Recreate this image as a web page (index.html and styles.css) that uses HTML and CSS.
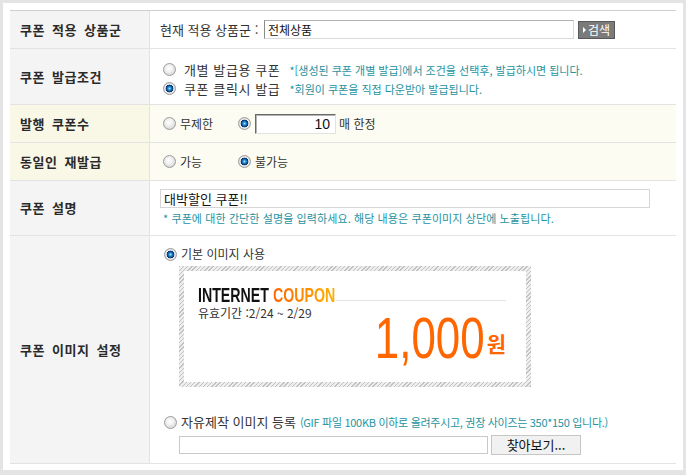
FILE: index.html
```html
<!DOCTYPE html>
<html lang="ko">
<head>
<meta charset="utf-8">
<title>쿠폰 설정</title>
<link rel="stylesheet" href="styles.css">
</head>
<body>
<div class="panel">
  <div class="form">
    <div class="row r1">
      <div class="label">쿠폰 적용 상품군</div>
      <div class="cell cell-inline">
        <span class="lead">현재 적용 상품군 :</span>
        <span class="field field-group">전체상품</span>
        <span class="btn-search">검색</span>
      </div>
    </div>

    <div class="row r2">
      <div class="label">쿠폰 발급조건</div>
      <div class="cell cell-lines">
        <div class="line">
          <span class="radio"></span>
          <span class="opt-big">개별 발급용 쿠폰</span>
          <span class="note note-inline">*[생성된 쿠폰 개별 발급]에서 조건을 선택후, 발급하시면 됩니다.</span>
        </div>
        <div class="line">
          <span class="radio on"></span>
          <span class="opt-big">쿠폰 클릭시 발급</span>
          <span class="note note-inline">*회원이 쿠폰을 직접 다운받아 발급됩니다.</span>
        </div>
      </div>
    </div>

    <div class="row r3 cream">
      <div class="label">발행 쿠폰수</div>
      <div class="cell cell-inline">
        <span class="opt"><span class="radio"></span><span class="opt-text">무제한</span></span>
        <span class="opt2">
          <span class="radio on"></span>
          <span class="field field-num">10</span>
          <span class="unit">매 한정</span>
        </span>
      </div>
    </div>

    <div class="row r4 cream">
      <div class="label">동일인 재발급</div>
      <div class="cell cell-inline">
        <span class="opt"><span class="radio"></span><span class="opt-text">가능</span></span>
        <span class="opt2"><span class="radio on"></span><span class="opt-text">불가능</span></span>
      </div>
    </div>

    <div class="row r5">
      <div class="label">쿠폰 설명</div>
      <div class="cell cell-stack">
        <span class="field field-desc">대박할인 쿠폰!!</span>
        <span class="note note-below">* 쿠폰에 대한 간단한 설명을 입력하세요. 해당 내용은 쿠폰이미지 상단에 노출됩니다.</span>
      </div>
    </div>

    <div class="row r6">
      <div class="label">쿠폰 이미지 설정</div>
      <div class="cell cell-stack cell-image">
        <div class="line line-basic">
          <span class="radio on"></span>
          <span class="opt-text">기본 이미지 사용</span>
        </div>
        <div class="coupon">
          <div class="coupon-inner">
            <div class="cp-head">
              <span class="cp-title-box"><span class="cp-title">INTERNET <span class="cp-orange">COUPON</span></span></span>
              <span class="cp-rule"></span>
            </div>
            <div class="cp-date">유효기간 :2/24 ~ 2/29</div>
            <div class="cp-amount"><span class="cp-num">1,000</span><span class="cp-won">원</span></div>
          </div>
        </div>
        <div class="line line-custom">
          <span class="radio"></span>
          <span class="opt-text opt-13">자유제작 이미지 등록</span>
          <span class="note note-custom">(GIF 파일 100KB 이하로 올려주시고, 권장 사이즈는 350*150 입니다.)</span>
        </div>
        <div class="file-row">
          <span class="field field-file"></span>
          <span class="btn-browse">찾아보기...</span>
        </div>
      </div>
    </div>
  </div>
</div>
</body>
</html>
```

FILE: styles.css
```css
* { box-sizing: border-box; }
html, body { margin: 0; }
body {
  background: #e4e4e4;
  padding: 3px;
  font-family: "Noto Sans CJK KR", "Liberation Sans", sans-serif;
  font-size: 12px;
  color: #333;
}
.panel {
  background: #fff;
  width: 680px;
  height: 467px;
  padding: 7px 7px 6px 7px;
}
.form {
  width: 666px;
  border-top: 1px solid #cfcfcf;
}
.row {
  display: grid;
  grid-template-columns: 140px 1fr;
  border-bottom: 1px solid #e3e3e3;
}
.r1 { height: 38px; }
.r2 { height: 56px; }
.r3 { height: 38px; }
.r4 { height: 38px; }
.r5 { height: 55px; }
.r6 { height: 228px; }

.label {
  background: #f4f4f4;
  border-right: 1px solid #e3e3e3;
  display: flex;
  align-items: center;
  padding-left: 10px;
  font-weight: bold;
  font-size: 13px;
  letter-spacing: 0.5px;
  word-spacing: 3px;
  color: #2a2a2a;
  line-height: 16px;
}
.cream .label { background: #f9f7e6; }
.cream .cell { background: #fcfcf2; }

.cell { padding-left: 10px; }
.cell-inline { display: flex; align-items: center; }
.cell-lines { display: flex; flex-direction: column; padding-top: 11px; padding-left: 13px; }
.cell-stack { display: flex; flex-direction: column; align-items: flex-start; }

.lead { width: 104px; font-size: 13px; line-height: 16px; white-space: nowrap; }

.field {
  display: inline-flex;
  align-items: center;
  background: #fff;
  color: #111;
  white-space: nowrap;
}
.field-group {
  width: 310px;
  height: 19px;
  border: 1px solid #dadada;
  border-left-color: #8a8a8a;
  border-top-color: #b0b0b0;
  padding-left: 3px;
  font-size: 12px;
}
.btn-search {
  margin-left: 4px;
  width: 37px;
  height: 18px;
  background: #7b7b7b;
  border: 1px solid #585858;
  color: #fff;
  font-size: 12px;
  line-height: 16px;
  display: inline-flex;
  align-items: center;
  padding-left: 4px;
}
.btn-search::before {
  content: "";
  width: 0;
  height: 0;
  border-left: 3px solid #fff;
  border-top: 3px solid transparent;
  border-bottom: 3px solid transparent;
  margin-right: 2px;
}

.radio {
  display: inline-block;
  flex: none;
  width: 13px;
  height: 13px;
  border-radius: 50%;
  border: 1px solid #9c9c9c;
  background: radial-gradient(circle at 45% 40%, #ffffff 0, #f2f2f2 35%, #c9c9c9 100%);
}
.radio.on {
  background: radial-gradient(circle at 50% 50%, #a8e4ff 0, #2b8fd6 1.5px, #0d5da8 2.6px, #06305e 3.6px, #f4f4f4 4.2px, #e2e2e2 5px, #b9b9b9 100%);
}

.line { display: flex; align-items: center; height: 19px; }
.opt-big { margin-left: 8px; font-size: 13px; letter-spacing: 0.6px; word-spacing: 0; line-height: 16px; }
.note {
  color: #2593a0;
  font-size: 11px;
  letter-spacing: 0;
  line-height: 14px;
  white-space: nowrap;
}
.note-inline { margin-left: 9px; }

.opt { display: flex; align-items: center; width: 75px; margin-left: 3px; }
.opt2 { display: flex; align-items: center; }
.opt-text { margin-left: 4px; font-size: 12px; line-height: 16px; white-space: nowrap; }
.opt-13 { font-size: 13px; }
.field-num {
  margin-left: 4px;
  width: 81px;
  height: 20px;
  border: 1px solid;
  border-color: #6a6a6a #e2e2e2 #e2e2e2 #6a6a6a;
  box-shadow: inset 1px 1px 0 #b4b4b4;
  justify-content: flex-end;
  padding-right: 5px;
  font-family: "Liberation Sans", sans-serif;
  font-size: 14px;
}
.unit { margin-left: 3px; font-size: 12px; line-height: 16px; }

.r5 .cell { padding-top: 8px; }
.field-desc {
  width: 490px;
  height: 19px;
  border: 1px solid #d6d6d6;
  padding-left: 3px;
  font-size: 13px;
}
.note-below { margin-top: 3px; margin-left: 3px; letter-spacing: 0.1px; }

.cell-image { padding-top: 10px; }
.line-basic { height: 16px; margin-left: 4px; }
.coupon {
  margin-top: 4px;
  margin-left: 19px;
  width: 352px;
  height: 121px;
  padding: 5px;
  background: repeating-linear-gradient(135deg, #c2c2c2 0 1px, #eeeeee 1px 3px);
}
.coupon-inner {
  background: #fff;
  width: 100%;
  height: 100%;
  padding: 14px 20px 0 14px;
  display: grid;
  grid-template-columns: 1fr auto;
  grid-template-rows: 21px auto;
}
.cp-head {
  grid-column: 1 / 3;
  display: flex;
  height: 21px;
  overflow: hidden;
}
.cp-title-box { width: 138px; flex: none; overflow: hidden; }
.cp-title {
  display: inline-block;
  font-family: "Liberation Sans", sans-serif;
  font-weight: bold;
  font-size: 20px;
  line-height: 20px;
  color: #111;
  white-space: nowrap;
  transform: scaleX(0.71);
  transform-origin: left center;
}
.cp-orange {
  background: linear-gradient(90deg, #ff6400, #ffb000);
  -webkit-background-clip: text;
  background-clip: text;
  color: transparent;
}
.cp-rule {
  flex: 1;
  height: 1px;
  background: #e2e2e2;
  align-self: flex-end;
  margin-bottom: 5px;
}
.cp-date {
  grid-column: 1;
  font-size: 12px;
  line-height: 14px;
  color: #333;
  white-space: nowrap;
}
.cp-amount {
  grid-column: 2;
  margin-top: 4px;
  white-space: nowrap;
  text-align: right;
  color: #ff6600;
}
.cp-num {
  display: inline-block;
  font-family: "Liberation Sans", sans-serif;
  font-size: 57px;
  line-height: 57px;
  transform: scaleX(0.77);
  transform-origin: right center;
  margin-right: -1px;
}
.cp-won {
  font-size: 21px;
  font-weight: bold;
  margin-left: 3px;
  vertical-align: 6px;
  line-height: 21px;
}

.line-custom { margin-top: 27px; height: 16px; margin-left: 4px; }
.note-custom { margin-left: 4px; font-size: 11px; letter-spacing: -0.3px; }
.file-row { display: flex; align-items: center; margin-top: 5px; margin-left: 19px; height: 20px; }
.field-file {
  width: 309px;
  height: 18px;
  border: 1px solid #c9c9c9;
}
.btn-browse {
  margin-left: 3px;
  width: 90px;
  height: 20px;
  background: #f1f1f1;
  border: 1px solid #c6c6c6;
  font-size: 13px;
  line-height: 18px;
  text-align: center;
  color: #111;
}
```
